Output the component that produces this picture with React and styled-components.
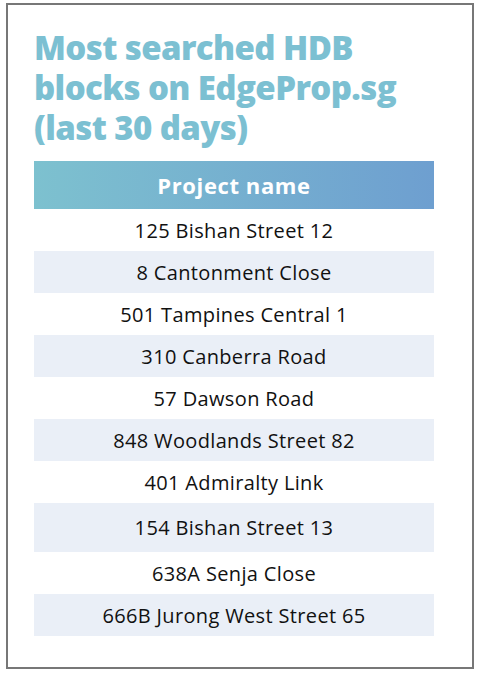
import styled, { createGlobalStyle } from "styled-components";

const GlobalStyle = createGlobalStyle`
  body {
    margin: 0;
    background: #ffffff;
    font-family: "Open Sans", "Liberation Sans", sans-serif;
  }
`;

const Frame = styled.div`
  box-sizing: border-box;
  width: 468px;
  height: 666px;
  margin: 3px 0 0 6px;
  border: 2px solid #777777;
  padding: 23px 0 0 26px;
`;

const Title = styled.h1`
  margin: 0 0 13px;
  width: 400px;
  font-family: "Open Sans", sans-serif;
  font-weight: 800;
  font-size: 33px;
  line-height: 40px;
  letter-spacing: -0.6px;
  color: #7cc0d2;
`;

const Table = styled.div`
  width: 400px;
  display: flex;
  flex-direction: column;
`;

const Header = styled.div`
  height: 48px;
  display: flex;
  align-items: center;
  justify-content: center;
  background: linear-gradient(90deg, #7dc1cf 0%, #6e9fd0 100%);
  color: #ffffff;
  font-weight: 700;
  font-size: 22px;
  letter-spacing: 0.6px;
`;

const Row = styled.div`
  height: ${(p) => (p.$tall ? 49 : 42)}px;
  display: flex;
  align-items: center;
  justify-content: center;
  background: ${(p) => (p.$shaded ? "#eaeff7" : "#ffffff")};
  color: #111111;
  font-size: 20px;
  letter-spacing: 0.35px;
`;

const blocks = [
  "125 Bishan Street 12",
  "8 Cantonment Close",
  "501 Tampines Central 1",
  "310 Canberra Road",
  "57 Dawson Road",
  "848 Woodlands Street 82",
  "401 Admiralty Link",
  "154 Bishan Street 13",
  "638A Senja Close",
  "666B Jurong West Street 65",
];

export default function App() {
  return (
    <>
      <GlobalStyle />
      <Frame>
        <Title>
          Most searched HDB blocks on EdgeProp.sg (last 30 days)
        </Title>
        <Table>
          <Header>Project name</Header>
          {blocks.map((name, i) => (
            <Row key={name} $shaded={i % 2 === 1} $tall={i === 7}>
              {name}
            </Row>
          ))}
        </Table>
      </Frame>
    </>
  );
}
